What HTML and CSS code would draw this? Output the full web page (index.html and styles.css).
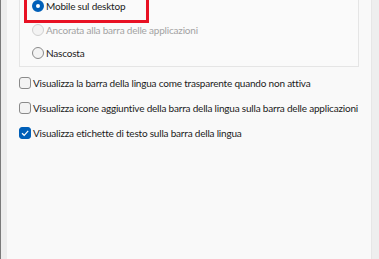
FILE: index.html
```html
<!DOCTYPE html>
<html lang="it">
<head>
    <meta charset="UTF-8">
    <title>Barra della lingua</title>
    <link rel="stylesheet" href="styles.css">
</head>
<body>
    <div class="window">
        <div class="side-left"></div>

        <div class="panel">
            <div class="group">
                <div class="highlight">
                    <label class="option">
                        <span class="radio checked"></span>
                        Mobile sul desktop
                    </label>
                </div>
                <label class="option disabled">
                    <span class="radio"></span>
                    Ancorata alla barra delle applicazioni
                </label>
                <label class="option last">
                    <span class="radio"></span>
                    Nascosta
                </label>
            </div>

            <label class="check-row">
                <span class="box"></span>
                Visualizza la barra della lingua come trasparente quando non attiva
            </label>
            <label class="check-row">
                <span class="box"></span>
                Visualizza icone aggiuntive della barra della lingua sulla barra delle applicazioni
            </label>
            <label class="check-row">
                <span class="box checked">
                    <svg width="10" height="10" viewBox="0 0 10 10"><path d="M2 5.2 L4.2 7.3 L8.2 2.8" fill="none" stroke="#fff" stroke-width="1.2"/></svg>
                </span>
                Visualizza etichette di testo sulla barra della lingua
            </label>
        </div>

        <div class="side-right"></div>
    </div>
</body>
</html>
```

FILE: styles.css
```css
body {
    margin: 0;
    font-family: Lato, "Noto Sans", sans-serif;
    font-size: 10px;
    letter-spacing: -0.2px;
    color: #1b1b1b;
    background-color: #f9f9f9;
    overflow: hidden;
    white-space: nowrap;
}
.window {
    display: flex;
    height: 259px;
}
.side-left {
    flex-shrink: 0;
    width: 6px;
    border-left: 1px solid #7a7a7a;
    background-color: #ededed;
}
.side-right {
    flex-shrink: 0;
    width: 7px;
    border-left: 1px solid #e6e6e6;
    background-color: #eeeeee;
}
.panel {
    flex: 1;
    min-width: 0;
    background-color: #f9f9f9;
    padding-left: 12px;
}
.group {
    width: 340px;
    margin-top: -20px;
    padding-bottom: 5px;
    border: 1px solid #e5e5e5;
    border-top: none;
    background-color: #fafafa;
    box-sizing: border-box;
}
.highlight {
    width: 125px;
    height: 43px;
    margin-left: 4px;
    padding: 18px 0 0 5px;
    border: 3px solid #e81123;
    border-top: none;
    box-sizing: border-box;
}
.option {
    display: flex;
    align-items: center;
    gap: 2px;
    height: 16px;
    margin-left: 12px;
}
.highlight .option {
    margin-left: 0;
}
.option.disabled {
    color: #a3a3a3;
    margin-top: -1px;
}
.option.last {
    margin-top: 7px;
}
.radio {
    flex-shrink: 0;
    width: 10px;
    height: 10px;
    border: 1px solid #8a8a8a;
    border-radius: 50%;
    background-color: #f3f3f3;
}
.option.disabled .radio {
    border-color: #d0d0d0;
}
.radio.checked {
    width: 4px;
    height: 4px;
    border: 4px solid #005fb8;
    background-color: #fff;
}
.check-row {
    display: flex;
    align-items: center;
    gap: 2px;
    height: 16px;
    margin-top: 9px;
}
.check-row:first-of-type {
    margin-top: 8px;
}
.box {
    flex-shrink: 0;
    width: 10px;
    height: 10px;
    border: 1px solid #8a8a8a;
    border-radius: 3px;
    background-color: #f3f3f3;
    display: flex;
    align-items: center;
    justify-content: center;
}
.box.checked {
    border-color: #005fb8;
    background-color: #005fb8;
}
```
